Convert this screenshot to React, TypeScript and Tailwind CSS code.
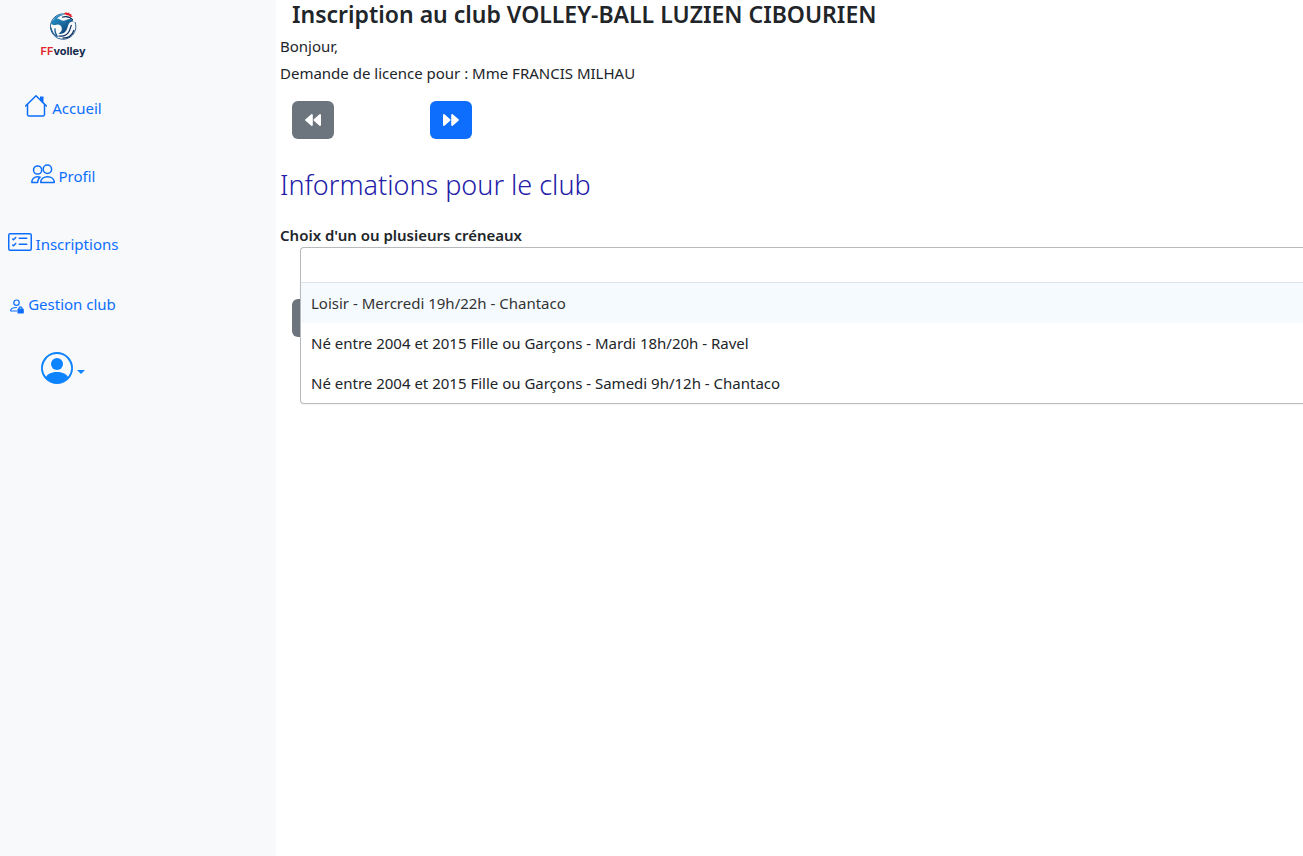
import type { ReactNode } from 'react';
import { BsCardChecklist, BsPersonCircle } from 'react-icons/bs';

const slots = [
  'Loisir - Mercredi 19h/22h - Chantaco',
  'Né entre 2004 et 2015 Fille ou Garçons - Mardi 18h/20h - Ravel',
  'Né entre 2004 et 2015 Fille ou Garçons - Samedi 9h/12h - Chantaco',
];

function HouseIcon() {
  return (
    <svg width="24" height="24" viewBox="0 0 24 24" fill="none" stroke="currentColor" strokeWidth="1.5" strokeLinejoin="round" strokeLinecap="round" aria-hidden="true">
      <path d="M1.6 12 12 1.700 22.400 12" />
      <path d="M3.500 10.500V20.600a1.400 1.400 0 0 0 1.400 1.400h14.200a1.400 1.400 0 0 0 1.400-1.400V10.500" />
      <path d="M16 2.500h3.500v7.500L16 6.500Z" fill="currentColor" stroke="none" />
    </svg>
  );
}

function PeopleIcon() {
  return (
    <svg width="24" height="20" viewBox="0 0 24 20" fill="none" stroke="currentColor" strokeWidth="1.5" strokeLinejoin="round" strokeLinecap="round" aria-hidden="true">
      <circle cx="6.600" cy="6" r="4.100" />
      <circle cx="16.400" cy="5.200" r="4.200" />
      <path d="M9.700 18.500c0-3.700 3-5.700 6.800-5.700s6.800 2 6.800 5.700Z" />
      <path d="M6.600 18.500H.8c0-3.700 2.500-5.700 5.800-5.700.9 0 1.700.1 2.500.4-1.300.9-2.100 2.200-2.500 5.300" />
    </svg>
  );
}

function PersonLockIcon() {
  return (
    <svg width="14" height="15" viewBox="0 0 14 15" fill="none" stroke="currentColor" strokeWidth="1.200" strokeLinecap="round" aria-hidden="true">
      <circle cx="6.500" cy="3.700" r="2.700" />
      <path d="M6.500 12H1.200c-.4 0-.6-.4-.5-.8C1.200 9.200 3.200 8.500 6.500 8.500" />
      <path d="M9 10V9.300a1.500 1.500 0 0 1 3 0V10" />
      <rect x="8" y="10.200" width="5.200" height="3.800" rx=".6" fill="currentColor" />
    </svg>
  );
}

function BackwardIcon() {
  return (
    <svg width="16" height="12" viewBox="0 0 16 12" fill="currentColor" aria-hidden="true">
      <path d="M7.800 1v10a.9.900 0 0 1-1.500.7L.5 6.700a.9.900 0 0 1 0-1.400l5.800-5A.9.900 0 0 1 7.800 1Z" />
      <path d="M16 1v10a.9.900 0 0 1-1.500.7L8.900 6.700a.9.900 0 0 1 0-1.400l5.600-5A.9.900 0 0 1 16 1Z" />
    </svg>
  );
}

function ForwardIcon() {
  return (
    <svg width="16" height="12" viewBox="0 0 16 12" fill="currentColor" aria-hidden="true">
      <path d="M0 1v10a.9.900 0 0 0 1.500.7l5.600-5a.9.900 0 0 0 0-1.400l-5.600-5A.9.900 0 0 0 0 1Z" />
      <path d="M8.200 1v10a.9.900 0 0 0 1.500.7l5.800-5a.9.900 0 0 0 0-1.400l-5.800-5A.9.900 0 0 0 8.200 1Z" />
    </svg>
  );
}

function ClubLogo() {
  return (
    <a href="#accueil" className="flex w-[50px] flex-col items-center gap-[3px]">
      <svg width="28" height="30" viewBox="0 0 28 30" aria-hidden="true">
        <defs>
          <linearGradient id="ball" x1="0" y1="0" x2="1" y2="1">
            <stop offset="0" stopColor="#2492c8" />
            <stop offset="1" stopColor="#0b3468" />
          </linearGradient>
        </defs>
        <path d="M16 3A12.700 12.700 0 1 0 26 11" fill="none" stroke="#2f5f8f" strokeWidth="1" />
        <path d="M3 10C5 7.500 8 6.700 11 8.500c2.500 1.500 4.300 1.500 6.500.3 3-1.600 5.800-1 7.200 1.700-2-.4-3.600.2-4.700 2-1.300 2.300-1.200 4.300-2.600 6.800-1.700 3-4.700 4.200-7.900 3.300 3-1.700 4-4 3-6.600-.8-2.200-2.800-3-5-2.300-2.300.7-4 .3-5.500-1.200-.2-1 .2-1.700 1-2.500Z" fill="url(#ball)" />
        <path d="M4.500 8.500C7 4.800 10.500 3.200 15 3.700c-3.500.8-6 2.200-7.500 4.500Z" fill="#2288bf" />
        <path d="M2 16.500c.6 4 2.800 7.300 6.500 9.300-2-2.600-2.900-5.300-2.500-8.500" fill="none" stroke="#155a92" strokeWidth="1.100" />
        <path d="M9.500 25c4.500.7 8.500-.8 10.500-4.500 1-1.900 1.400-4 2.500-6.500M13.500 27.200c5.500 0 10-3 11.500-8.200" fill="none" stroke="#0b2f60" strokeWidth="1.200" />
        <path d="M13 6.200c4-1.200 7.900-.4 10.800 2.600" fill="none" stroke="#0b2f60" strokeWidth="1.100" />
        <path d="m15 2.200 2-1 1.500.8 1.500-.4.800 1.500 1.700.2-.1 1.600 1.500 1-2.200.2-2-1.600-2.700-.5Z" fill="#e1252b" />
      </svg>
      <span className="font-['Inter',sans-serif] text-[11px] leading-[14px] font-bold text-[#14294f]">
        <span className="font-semibold text-[#e1252b]">FF</span>volley
      </span>
    </a>
  );
}

function NavLink({ href, icon, children }: { href: string; icon: ReactNode; children: ReactNode }) {
  return (
    <a href={href} className="flex h-[60px] items-center justify-center gap-1 text-[#0d6efd]">
      {icon}
      <span>{children}</span>
    </a>
  );
}

function StepButton({ label, primary, children }: { label: string; primary?: boolean; children?: ReactNode }) {
  return (
    <button
      type="button"
      aria-label={label}
      className={`flex h-[38px] w-[42px] items-center justify-center rounded-md text-white ${primary ? 'bg-[#0d6efd]' : 'bg-[#6c757d]'}`}
    >
      {children}
    </button>
  );
}

export default function App() {
  return (
    <div className="flex min-h-screen bg-white font-['Noto_Sans','Open_Sans',sans-serif] text-[15px] leading-6 text-[#212529]">
      <aside className="w-[276px] shrink-0 bg-[#f8f9fa]">
        <nav aria-label="Menu principal" className="flex w-[126px] flex-col">
          <div className="flex justify-center pt-[11px] pb-5">
            <ClubLogo />
          </div>
          <div className="flex flex-col gap-2">
            <NavLink href="#accueil" icon={<span className="pb-1"><HouseIcon /></span>}>Accueil</NavLink>
            <NavLink href="#profil" icon={<span className="pb-1"><PeopleIcon /></span>}>Profil</NavLink>
            <NavLink href="#inscriptions" icon={<span className="pb-1"><BsCardChecklist size={24} /></span>}>Inscriptions</NavLink>
          </div>
          <NavLink href="#gestion" icon={<span className="pt-1"><PersonLockIcon /></span>}>Gestion club</NavLink>
          <button type="button" aria-label="Mon compte" className="flex h-[68px] items-center justify-center gap-1 text-[#0d83fd]">
            <BsPersonCircle size={32} />
            <svg width="8" height="4" viewBox="0 0 8 4" className="mt-2" fill="currentColor" aria-hidden="true">
              <path d="M0 0h8L4 4Z" />
            </svg>
          </button>
        </nav>
      </aside>

      <main className="min-w-0 flex-1 pl-1">
        <h1 className="pl-3 text-[23px] leading-7 font-semibold">Inscription au club VOLLEY-BALL LUZIEN CIBOURIEN</h1>
        <p className="mt-1.5">Bonjour,</p>
        <p className="mt-[3px]">Demande de licence pour : Mme FRANCIS MILHAU</p>
        <div className="mt-4 flex gap-24 pl-3">
          <StepButton label="Précédent"><BackwardIcon /></StepButton>
          <StepButton label="Suivant" primary><ForwardIcon /></StepButton>
        </div>
        <h2 className="mt-7 text-[27px] leading-9 font-light text-[#2320a8]">Informations pour le club</h2>
        <label htmlFor="slot-search" className="mt-5 block font-semibold">Choix d'un ou plusieurs créneaux</label>
        <div className="relative ml-5 h-[52px]">
          <div className="absolute inset-x-0 top-0 z-10 rounded-l border border-r-0 border-[#b8bbbe] bg-white shadow-xs">
            <input id="slot-search" type="text" className="block h-[34px] w-full rounded-tl px-2 outline-none" />
            <ul role="listbox" aria-label="Créneaux" className="border-t border-[#dee2e6]">
              {slots.map((slot, index) => (
                <li
                  key={slot}
                  role="option"
                  aria-selected={index === 0}
                  className={`h-10 px-2.5 py-2 ${index === 0 ? 'bg-[#f5fafe] text-[#333333]' : 'text-[#212529]'}`}
                >
                  {slot}
                </li>
              ))}
            </ul>
          </div>
        </div>
        <div className="pl-3">
          <StepButton label="Étape précédente" />
        </div>
      </main>
    </div>
  );
}
